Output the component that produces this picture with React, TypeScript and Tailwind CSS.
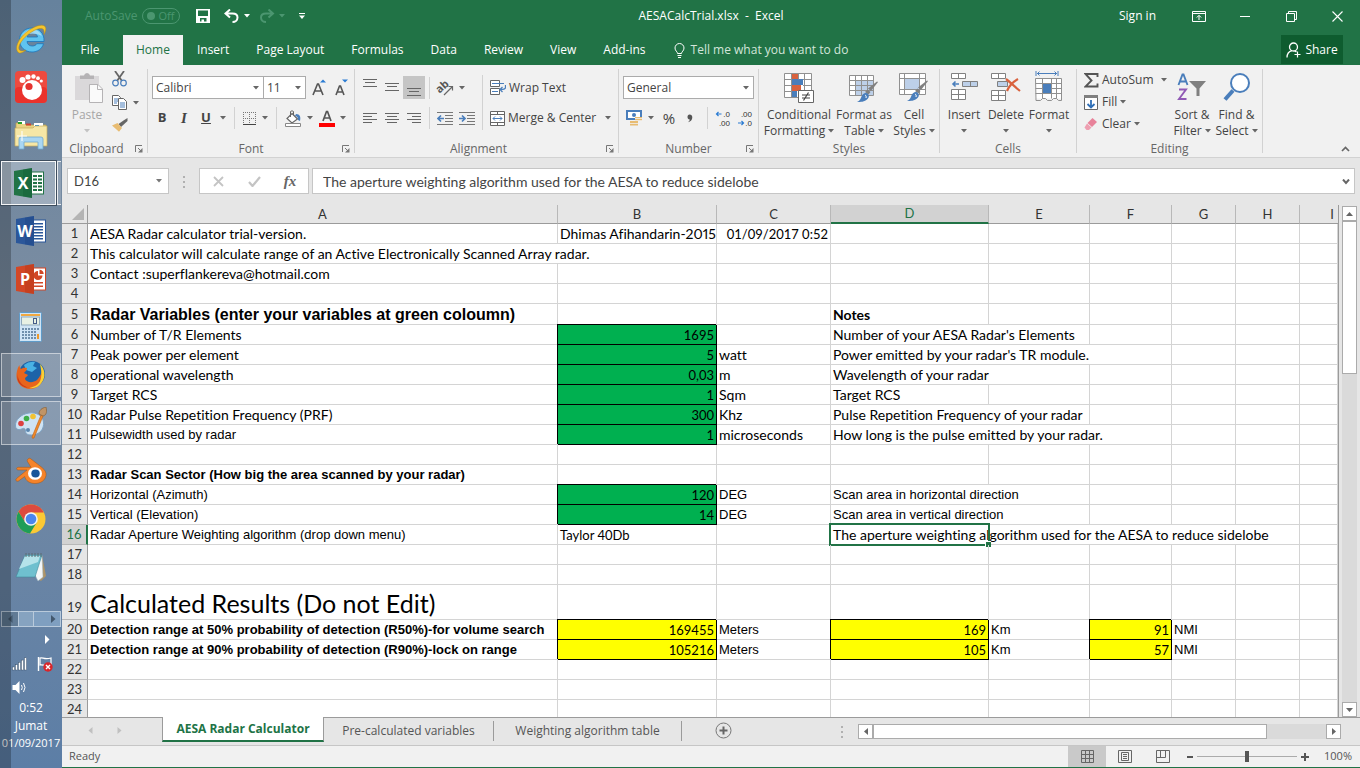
import { type ReactNode } from "react";
import { clsx } from "clsx";

/* ---------- small shared pieces ---------- */

function Arrow({ className = "text-[#666]" }: { className?: string }) {
  return (
    <svg width="6" height="4" viewBox="0 0 6 4" className={clsx("shrink-0", className)} fill="currentColor">
      <path d="M0 0h6L3 3.4z" />
    </svg>
  );
}

function Svg({ w, h, children, className }: { w: number; h: number; children: ReactNode; className?: string }) {
  return (
    <svg width={w} height={h} viewBox={`0 0 ${w} ${h}`} fill="none" className={clsx("shrink-0", className)}>
      {children}
    </svg>
  );
}

function Group({
  label,
  launcher,
  className,
  children,
}: {
  label: string;
  launcher?: boolean;
  className: string;
  children: ReactNode;
}) {
  return (
    <section
      aria-label={label}
      className={clsx("relative mt-1 flex h-[84px] shrink-0 flex-col border-r border-[#d2d2d2]", className)}
    >
      <div className="flex h-[72px]">{children}</div>
      <div className="h-3 text-center leading-4 text-[#666]">{label}</div>
      {launcher && (
        <button aria-label={`${label} settings`} className="absolute right-1 bottom-0">
          <Svg w={8} h={8}>
            <path d="M.5 7V.5H7" stroke="#777" />
            <path d="M3 3l3 3" stroke="#777" />
            <path d="M7.5 3v4.5H3z" fill="#777" />
          </Svg>
        </button>
      )}
    </section>
  );
}

function BigButton({
  icon,
  lines,
  arrowBelow,
  className,
}: {
  icon: ReactNode;
  lines: string[];
  arrowBelow?: boolean;
  className: string;
}) {
  return (
    <button className={clsx("flex flex-col items-center pt-1", className)}>
      <span className="flex h-[34px] items-start justify-center">{icon}</span>
      {lines.map((line, i) => (
        <span key={line} className="flex h-4 items-center gap-[3px] leading-4 whitespace-nowrap">
          {line}
          {!arrowBelow && i === lines.length - 1 && <Arrow />}
        </span>
      ))}
      {arrowBelow && (
        <span className="flex h-4 items-center">
          <Arrow />
        </span>
      )}
    </button>
  );
}

const Sep = ({ className = "h-[22px]" }: { className?: string }) => (
  <span className={clsx("w-px shrink-0 bg-[#d2d2d2]", className)} />
);

function Lines({ rows }: { rows: [number, number, number][] }) {
  return (
    <Svg w={14} h={13}>
      {rows.map(([x, y, w]) => (
        <path key={y} d={`M${x} ${y + 0.5}h${w}`} stroke="#666" />
      ))}
    </Svg>
  );
}

/* ---------- taskbar ---------- */

function OfficeIcon({ letter, color, dark, children }: { letter: string; color: string; dark: string; children: ReactNode }) {
  return (
    <svg width="30" height="30" viewBox="0 0 30 30">
      <rect x="15" y="4" width="14.5" height="22" fill="#fff" stroke={color} />
      {children}
      <path d="M0 3l18-3v30L0 27z" fill={color} />
      <path d="M9 1.500L18 0v30l-9-1.500z" fill={dark} opacity=".35" />
      <text x="9" y="21" textAnchor="middle" fontFamily="Open Sans, sans-serif" fontWeight="700" fontSize="16" fill="#fff">
        {letter}
      </text>
    </svg>
  );
}

const ieIcon = (
  <svg width="32" height="32" viewBox="0 0 32 32">
    <path
      d="M29 18.500H12c.3 3 2.500 4.500 5.300 4.500 2 0 3.600-.8 4.500-2.300h6.700C27 26 22.500 29 17 29 9.800 29 4.500 24 4.500 17S9.900 5 16.800 5C24.500 5 29.600 10.600 29 18.500zM22.500 14c-.4-2.500-2.300-4-5-4s-4.800 1.500-5.300 4z"
      fill="#5fc3f0"
      stroke="#1b76bd"
      strokeWidth=".8"
    />
    <path d="M7 13c2-4 6-6.500 10-6.500 5 0 8.500 2.500 9.800 6.500-5-3-14-3-19.800 0z" fill="#b9e6fa" opacity=".7" />
    <path
      d="M3.500 29.500C-1 26 3 16 11 9.500 18.500 3.300 27 .5 29.800 3.200c1.800 1.700 1 5-.8 8.300 .3-3 .1-4.700-1.200-5.600C25 4.300 18.500 7 12.500 12 5.800 17.600 2.200 24.500 4.500 27c1.300 1.400 3.800 1.200 6.500 0-3.500 3-6.200 3.600-7.500 2.500z"
      fill="#f5c52c"
      stroke="#b98a10"
      strokeWidth=".5"
    />
  </svg>
);

const gomIcon = (
  <svg width="32" height="32" viewBox="0 0 32 32">
    <rect width="32" height="32" rx="4" fill="#ee4a3f" />
    <rect y="16" width="32" height="16" rx="4" fill="#e8231f" opacity=".6" />
    <circle cx="17" cy="19" r="10" fill="#fff" />
    <circle cx="14" cy="15.500" r="3.600" fill="#e53330" />
    <circle cx="7.500" cy="9" r="3" fill="#fff" />
    <circle cx="13" cy="6" r="2.600" fill="#fff" />
    <circle cx="18.500" cy="5.500" r="2.200" fill="#fff" />
    <circle cx="23" cy="7.200" r="1.900" fill="#fff" />
    <circle cx="26.300" cy="10" r="1.600" fill="#fff" />
  </svg>
);

const explorerIcon = (
  <svg width="34" height="30" viewBox="0 0 34 30">
    <path d="M2 3h8l2 2h20v20H2z" fill="#e9d383" stroke="#b79d50" strokeWidth=".7" />
    <path d="M4 1h7v3H4zM20 3h9v4h-9z" fill="#fff" />
    <path d="M4 2h4v2H4z" fill="#28a028" />
    <path d="M12 3.500h5v2h-5z" fill="#d04030" />
    <path d="M21 5h4v2h-4z" fill="#2f8fe0" />
    <path d="M1 8h18l2-2h12v20H1z" fill="#f6e7a6" stroke="#c6ac5c" strokeWidth=".7" />
    <path d="M5 29V19q0-2 2-2h20q2 0 2 2v10h-5v-7H10v7z" fill="#a9d6f2" stroke="#6fa8cf" strokeWidth=".8" />
    <path d="M8 11v10M3 16h10" stroke="#fff" strokeWidth="1.200" opacity=".9" />
  </svg>
);

const calcIcon = (
  <svg width="24" height="30" viewBox="0 0 24 30">
    <rect x=".5" y=".5" width="22" height="29" rx="1" fill="#cfe4f5" stroke="#5e9bc9" />
    <path d="M2 2h19v2H2z" fill="#f0a840" />
    <rect x="2.500" y="5" width="18" height="8" fill="#e8f1e4" stroke="#8fa9bd" />
    <rect x="14.500" y="6.500" width="3" height="5" stroke="#445c88" fill="none" />
    {[16, 19, 22, 25].map((y) =>
      [3, 6, 9, 12, 15].map((x) => <rect key={`${x}-${y}`} x={x} y={y} width="2" height="2" fill="#6f8fac" />),
    )}
    <path d="M18 16h2v2h-2z" fill="#6f8fac" />
    <path d="M18 22h2v5h-2z" fill="#ef9a2a" />
  </svg>
);

const firefoxIcon = (
  <svg width="30" height="30" viewBox="0 0 30 30">
    <circle cx="16" cy="14" r="13" fill="#1d63a8" />
    <path d="M8 5q5-4 11-3l-2 4 4 2-5 4-6-2z" fill="#49b1e4" />
    <path d="M26 8c1 3 2 6 1 10-1 7-7 11-13 11C7 29 1 24 .500 17 .200 12 2 7 3.500 5c0 2 .5 3 1.500 4 2-1.500 4-1.500 6-1 0 2-1.500 3.500-3 5 1 1 3 1 4 2-1 2-3 2-3 4 2 4 8 4 12 1 3-3 5-7 5-12z" fill="#e8651c" />
    <path d="M24 4c5 5 6 13 2 18-3 5-8 7-13 6 6-1 11-4 12-10 1-5 0-9-1-14z" fill="#fbd034" />
    <path d="M1.500 13c0 8 5 14 13 15-6 0-12-3-13-9z" fill="#c93a1a" />
  </svg>
);

const paintIcon = (
  <svg width="32" height="32" viewBox="0 0 32 32">
    <path d="M14 6C6 7 0 13 .500 19c.300 4 4 4 6 3s4-1 4 2c0 2 1 4 6 4 8 0 13-6 12-13C27.800 9 22 5 14 6z" fill="#cfe3f3" stroke="#7ea3c4" />
    <circle cx="6" cy="16.500" r="2.800" fill="#dc4040" />
    <circle cx="11.500" cy="11.500" r="2.800" fill="#3fae49" />
    <circle cx="18" cy="9.500" r="2.800" fill="#f1c232" />
    <circle cx="13" cy="23" r="2" fill="#5b87b0" />
    <path d="M26 8l2 1-9 22q-2 1-2-1z" fill="#f08a2b" stroke="#bd6012" strokeWidth=".6" />
    <path d="M24 7c0-4 3-6 7-7 1 4 1 8-3 9z" fill="#c09466" stroke="#80592e" strokeWidth=".6" />
  </svg>
);

const blenderIcon = (
  <svg width="32" height="28" viewBox="0 0 32 28">
    <path
      d="M13 2c1-1 2-1 3 0l11 8.500c3 2.500 4.500 5 4 8-.800 5-5.500 8-11 8s-9.500-3-10.300-7L3.500 24c-2 1-3.500-1-2-2.500L12 13H3.500C1 13 1 10.500 3.500 10.300H16L12.800 5C12 4 12 3 13 2z"
      fill="#f5832a"
      stroke="#a8550f"
      strokeWidth=".5"
    />
    <ellipse cx="20" cy="16.500" rx="7" ry="6.300" fill="#fff" />
    <ellipse cx="20.500" cy="16.500" rx="4.200" ry="4" fill="#17569b" />
  </svg>
);

const chromeIcon = (
  <svg width="30" height="30" viewBox="0 0 30 30">
    <circle cx="15" cy="15" r="14.500" fill="#fbc934" />
    <path d="M15 .500A14.500 14.500 0 0 0 2.500 7.700L9 18l6-9.500h12.800A14.500 14.500 0 0 0 15 .500z" fill="#dd4b3e" />
    <path d="M2.500 7.700A14.500 14.500 0 0 0 14 29.500L21 18H9z" fill="#1f9d58" />
    <circle cx="15" cy="15" r="6.800" fill="#f1f3f4" />
    <circle cx="15" cy="15" r="5.300" fill="#4a86ee" />
  </svg>
);

const notepadIcon = (
  <svg width="32" height="30" viewBox="0 0 32 30">
    <path d="M27 3l4 21-5 5-3-2z" fill="#ad9468" />
    <path d="M10 3h17l1 22-5 4z" fill="#f4f7f8" stroke="#9fb3ba" strokeWidth=".5" />
    <path d="M10 3h17l-7 22-19 0z" fill="#6fc0cf" stroke="#3f8b9b" strokeWidth=".6" />
    <path d="M10 4h15l-2 6-19 7z" fill="#b5e3ea" />
    <path d="M11 1v4M14 1v4M17 1v4M20 1v4M23 1v4M26 1v4" stroke="#5d6b72" />
  </svg>
);

const excelIcon = (
  <OfficeIcon letter="X" color="#217346" dark="#0f5a30">
    {[7, 10.5, 14, 17.5, 21].map((y) => (
      <path key={y} d={`M19 ${y}h4v2h-4zM24 ${y}h4v2h-4z`} fill="#217346" />
    ))}
  </OfficeIcon>
);

const wordIcon = (
  <OfficeIcon letter="W" color="#2b579a" dark="#1a4180">
    {[7, 10, 13, 16, 19, 22].map((y) => (
      <path key={y} d={`M18 ${y}h9v1.500h-9z`} fill="#2b579a" />
    ))}
  </OfficeIcon>
);

const pptIcon = (
  <OfficeIcon letter="P" color="#d24726" dark="#b13415">
    <path d="M22 7a4.500 4.500 0 1 0 4.500 4.500H22z" fill="#d24726" />
    <path d="M23.500 5.800v4.200h4.200a4.200 4.200 0 0 0-4.200-4.200z" fill="#d24726" />
    <path d="M18 18h9v1.500h-9zM18 21.500h9V23h-9z" fill="#d24726" />
  </OfficeIcon>
);

const apps: { name: string; icon: ReactNode; state?: "active" | "open" }[] = [
  { name: "Internet Explorer", icon: ieIcon },
  { name: "GOM Player", icon: gomIcon },
  { name: "File Explorer", icon: explorerIcon },
  { name: "Excel", icon: excelIcon, state: "active" },
  { name: "Word", icon: wordIcon },
  { name: "PowerPoint", icon: pptIcon },
  { name: "Calculator", icon: calcIcon },
  { name: "Firefox", icon: firefoxIcon, state: "open" },
  { name: "Paint", icon: paintIcon, state: "open" },
  { name: "Blender", icon: blenderIcon },
  { name: "Chrome", icon: chromeIcon },
  { name: "Notepad", icon: notepadIcon },
];

function Taskbar() {
  return (
    <aside className="relative flex w-[62px] shrink-0 flex-col bg-linear-to-b from-[#66829d] via-[#7b8da2] via-40% to-[#5c7ea6] pt-[15px]">
      <div className="absolute inset-y-0 left-0 w-[11px] bg-black/25" />
      {apps.map((app) => (
        <div key={app.name} className="relative flex h-12 py-[2px] pr-px pl-px">
          <button
            aria-label={app.name}
            className={clsx(
              "flex flex-1 items-center justify-center border",
              app.state === "active" && "border-white/90 bg-white/30 shadow-[0_0_0_1px_#3d4c5c]",
              app.state === "open" && "border-white/50 bg-white/15",
              !app.state && "border-transparent",
            )}
          >
            {app.icon}
          </button>
          {app.state === "active" && (
            <span className="ml-px w-1 border border-r-0 border-white/80 bg-white/20" />
          )}
        </div>
      ))}
      <div className="mx-px mt-5 flex h-4 border border-[#b9cadb] bg-[#7f9fc0]">
        <span className="flex w-4 items-center justify-center bg-[#617b95]">
          <Svg w={5} h={8}>
            <path d="M4.500 0v8L0 4z" fill="#43586d" />
          </Svg>
        </span>
        <span className="w-4 border-x border-[#b9cadb] bg-[#86a3c0]" />
        <span className="flex flex-1 items-center justify-end pr-1">
          <Svg w={5} h={8}>
            <path d="M0 0v8l4.500-4z" fill="#43586d" />
          </Svg>
        </span>
      </div>
      <button aria-label="Show hidden icons" className="mt-2 mr-3 self-end">
        <Svg w={5} h={9}>
          <path d="M0 0v9l4.500-4.500z" fill="#fff" />
        </Svg>
      </button>
      <div className="mt-3 flex h-4 items-center gap-[9px] pl-3">
        <Svg w={16} h={14}>
          {[0, 1, 2, 3, 4].map((i) => (
            <rect key={i} x={i * 3 + 0.5} y={10 - i * 2.3} width="2" height={3 + i * 2.3} fill="#fff" stroke="#34495e" strokeWidth=".4" />
          ))}
        </Svg>
        <Svg w={16} h={16}>
          <path d="M1.500 1v14" stroke="#fff" strokeWidth="1.400" />
          <path d="M3 2c3-1 4 2 11 0v7c-6 2-8-1-11 0z" stroke="#fff" strokeWidth="1.200" />
          <circle cx="11" cy="11" r="4.700" fill="#d9252a" />
          <path d="M9 9l4 4M13 9l-4 4" stroke="#fff" strokeWidth="1.400" />
        </Svg>
      </div>
      <div className="mt-2 pl-3">
        <Svg w={16} h={15}>
          <path d="M.500 5h3l4-4v13l-4-4h-3z" fill="#fff" />
          <path d="M9.500 5q1.500 2.500 0 5M11.500 3q3 4.500 0 9" stroke="#fff" />
        </Svg>
      </div>
      <div className="mt-1 text-center text-[12px] leading-[18px] whitespace-nowrap text-white">
        <div>0:52</div>
        <div>Jumat</div>
        <div className="text-[11px] leading-4">01/09/2017</div>
      </div>
    </aside>
  );
}

/* ---------- title bar and tabs ---------- */

function TitleBar() {
  return (
    <header className="flex h-8 items-center text-white">
      <div className="flex flex-1 items-center">
        <label htmlFor="autosave" className="ml-[23px] text-[#4b9670]">
          AutoSave
        </label>
        <span className="relative ml-[5px] h-4 w-[38px] rounded-full border border-[#4b9670] text-[11px] leading-[14px] text-[#4b9670]">
          <input id="autosave" type="checkbox" disabled className="absolute inset-0 appearance-none" />
          <span className="absolute top-[3px] left-1 size-2 rounded-full bg-[#4b9670]" />
          <span className="absolute right-[5px]">Off</span>
        </span>
        <button aria-label="Save" className="ml-4">
          <Svg w={14} h={14}>
            <path d="M0 0h14v14H0zM2 1.500V7h10V1.500zM4 9v3.500h1.500V10.500H8v2h2.500V9z" fill="#fff" fillRule="evenodd" />
          </Svg>
        </button>
        <button aria-label="Undo" className="ml-[14px]">
          <Svg w={16} h={14}>
            <path d="M6 .500L1.500 4.500 6 8.500M2 4.500h6.500c3 0 5 1.500 5 4s-2 4.500-5 4.500" stroke="#fff" strokeWidth="2" />
          </Svg>
        </button>
        <Arrow className="ml-1 text-white" />
        <button aria-label="Redo" className="ml-[9px]">
          <Svg w={16} h={14}>
            <path d="M9.500.500L14 4.500 9.500 8.500M13.500 4.500H7c-3 0-5 1.500-5 4S4 13 7 13" stroke="#4b9670" strokeWidth="2" />
          </Svg>
        </button>
        <Arrow className="ml-1 text-[#4b9670]" />
        <button aria-label="Customize Quick Access Toolbar" className="ml-[14px]">
          <Svg w={6} h={6}>
            <path d="M0 .500h6" stroke="#fff" />
            <path d="M0 2.500h6L3 6z" fill="#fff" />
          </Svg>
        </button>
      </div>
      <h1 className="whitespace-pre">AESACalcTrial.xlsx&nbsp; -&nbsp; Excel</h1>
      <div className="flex flex-1 items-center justify-end">
        <button className="mr-5">Sign in</button>
        <button aria-label="Ribbon display options" className="flex w-[46px] justify-center">
          <Svg w={14} h={11}>
            <path d="M.500.500h13v10H.500zM.500 2.500h13M7 9V4.500M4.800 6.500L7 4.300l2.200 2.200" stroke="#fff" />
          </Svg>
        </button>
        <button aria-label="Minimize" className="flex w-[46px] justify-center">
          <Svg w={10} h={11}>
            <path d="M0 5.500h10" stroke="#fff" />
          </Svg>
        </button>
        <button aria-label="Restore" className="flex w-[46px] justify-center">
          <Svg w={11} h={11}>
            <path d="M.500 2.500h8v8h-8zM2.500 2.500v-2h8v8h-2" stroke="#fff" />
          </Svg>
        </button>
        <button aria-label="Close" className="flex w-[46px] justify-center">
          <Svg w={11} h={11}>
            <path d="M.500.500l10 10M10.500.500l-10 10" stroke="#fff" strokeWidth="1.100" />
          </Svg>
        </button>
      </div>
    </header>
  );
}

const ribbonTabs = ["Home", "Insert", "Page Layout", "Formulas", "Data", "Review", "View", "Add-ins"];

function RibbonTabs() {
  return (
    <nav className="mt-[3px] flex h-[30px] items-stretch gap-px text-white">
      <button className="w-[60px] pr-1">File</button>
      {ribbonTabs.map((tab) => (
        <button
          key={tab}
          className={clsx("px-[13px] whitespace-nowrap", tab === "Home" && "bg-[#f1f1f1] text-[#217346]")}
        >
          {tab}
        </button>
      ))}
      <button className="ml-[14px] flex items-center gap-[6px] whitespace-nowrap text-[#d3e5da]">
        <Svg w={11} h={15}>
          <path d="M3.500 10.500C3.500 8.500 1 8 1 5a4.500 4.500 0 0 1 9 0c0 3-2.500 3.500-2.500 5.500zM3.500 12.500h4M4 14.500h3" stroke="#fff" />
        </Svg>
        Tell me what you want to do
      </button>
      <button className="mr-[17px] mb-px ml-auto flex w-[62px] items-center justify-center gap-1 bg-[#0e5c2f]">
        <Svg w={15} h={16}>
          <circle cx="7.500" cy="5" r="4" stroke="#fff" strokeWidth="1.300" />
          <path d="M1 15.500c0-4 2-6 5-6.800M8.500 9c1 .2 1.500.6 2 1" stroke="#fff" strokeWidth="1.300" />
          <path d="M11.500 9.500v6M8.500 12.500h6" stroke="#fff" strokeWidth="1.200" />
        </Svg>
        Share
      </button>
    </nav>
  );
}

/* ---------- ribbon ---------- */

function ComboBox({ label, value, className }: { label: string; value: string; className: string }) {
  return (
    <span className={clsx("relative h-[23px] border border-[#ababab] bg-white", className)}>
      <select
        aria-label={label}
        defaultValue={value}
        className="block size-full appearance-none pl-[3px] text-[#444] outline-none"
      >
        <option>{value}</option>
      </select>
      <Arrow className="pointer-events-none absolute top-[9px] right-1 text-[#666]" />
    </span>
  );
}

const brush = (
  <>
    <path d="M30 6l-7 9-3-2.500 9-7z" fill="#808080" />
    <path d="M19.500 13.500l3 2.500-2 2.500-3.500-2.500z" fill="#808080" />
    <path d="M18.500 17c3 1.500 3 4 1 6-3 3-7 3-10.500 3 3-1 3.500-3 4.500-5.500s3-4 5-3.500z" fill="#4a7ebb" />
    <path d="M17 19c1 .5 1.500 1.500 1 3" stroke="#fff" />
  </>
);

function Ribbon() {
  return (
    <div className="flex h-[93px] border-b border-[#d2d2d2] bg-[#f1f1f1] text-[#444]">
      <Group label="Clipboard" launcher className="w-[86px] pr-4 [&>div:first-child]:w-[85px]">
        <button className="flex w-[50px] flex-col items-center pt-1 text-[#a6a6a6]">
          <Svg w={28} h={32} className="mb-[2px] ml-1">
            <path d="M0 3h24v24H0z" fill="#dad8da" />
            <path d="M5 2.500h4Q9.500 0 12 0t3 2.500h4V6H5z" fill="#b5b3b5" />
            <path d="M14.500 11.500h8.500l4.500 4.500v13.500h-13z" fill="#fafafa" stroke="#b5b3b5" />
            <path d="M22.500 11.500v5h5" stroke="#b5b3b5" />
          </Svg>
          <span className="leading-4">Paste</span>
          <span className="flex h-4 items-center">
            <Arrow className="text-[#c3c3c3]" />
          </span>
        </button>
        <div className="flex flex-col gap-2 pt-[2px]">
          <button aria-label="Cut">
            <Svg w={15} h={16}>
              <path d="M3 0l7 10M12 0L5 10" stroke="#666" strokeWidth="1.800" />
              <circle cx="3.500" cy="12" r="2.800" stroke="#4a7ebb" strokeWidth="1.200" />
              <circle cx="11.500" cy="12" r="2.800" stroke="#4a7ebb" strokeWidth="1.200" />
            </Svg>
          </button>
          <button aria-label="Copy" className="flex items-center gap-[6px]">
            <Svg w={15} h={15}>
              <path d="M.500.500h6l2 2v8h-8z" fill="#fff" stroke="#666" />
              <path d="M2 4h4M2 6h4M2 8h3" stroke="#4a7ebb" />
              <path d="M6.500 3.500h5l3 3v8h-8z" fill="#fff" stroke="#666" />
              <path d="M8 8h5M8 10h5M8 12h5" stroke="#4a7ebb" />
            </Svg>
            <Arrow />
          </button>
          <button aria-label="Format painter">
            <Svg w={16} h={14}>
              <path d="M15.500 0v3L9 9 6.500 6l5-3.500z" fill="#666" />
              <path d="M5.500 5L10 10l-3 3.800L0 7.500z" fill="#e8bc72" />
            </Svg>
          </button>
        </div>
      </Group>

      <Group label="Font" launcher className="w-[207px]">
        <div className="flex flex-col pt-[7px] pl-1">
          <div className="flex h-[23px] items-center">
            <ComboBox label="Font" value="Calibri" className="w-28" />
            <ComboBox label="Font size" value="11" className="-ml-px w-[43px]" />
            <button aria-label="Increase font size" className="ml-[6px]">
              <Svg w={14} h={18}>
                <path d="M1 16L5.500 5h1L11 16M2.800 12h6.400" stroke="#555" strokeWidth="1.600" />
                <path d="M8 3.500h6L11 .500z" fill="#2b7cd3" />
              </Svg>
            </button>
            <button aria-label="Decrease font size" className="ml-[9px]">
              <Svg w={13} h={18}>
                <path d="M1 16l3.500-9h1L9 16M2.300 13h5.400" stroke="#555" strokeWidth="1.600" />
                <path d="M7 .500h6L10 3.500z" fill="#2b7cd3" />
              </Svg>
            </button>
          </div>
          <div className="mt-2 flex h-[22px] items-center">
            <button className="w-5 text-[13px] font-bold">B</button>
            <button className="ml-[2px] w-5 font-['Liberation_Serif',serif] text-[15px] font-bold italic">I</button>
            <button className="ml-[2px] w-5 text-[13px] font-bold underline">U</button>
            <Arrow className="ml-1 text-[#666]" />
            <Sep className="ml-2 h-[22px]" />
            <button aria-label="Borders" className="ml-2 flex items-center gap-[6px]">
              <Svg w={13} h={13}>
                <path d="M.500 0v12M6.500 0v12M12.500 0v12M0 .500h13M0 6.500h13" stroke="#777" strokeDasharray="1 1" />
                <path d="M0 12.500h13" stroke="#444" />
              </Svg>
              <Arrow />
            </button>
            <Sep className="ml-2 h-[22px]" />
            <button aria-label="Fill color" className="ml-2 flex items-center gap-[6px]">
              <Svg w={16} h={17}>
                <path d="M7 3.500l5.500 5.500L7 13 2 8.500z" fill="#fff" stroke="#666" strokeWidth="1.200" />
                <path d="M5.500 7V1.500Q7 0 8.500 1.500V5" stroke="#666" />
                <path d="M11 4c4 0 5 3 4 7l-2-1c0-3-1-4-3-4z" fill="#4a7ebb" />
                <path d="M.500 13.500h15v3H.500z" fill="#fff" stroke="#888" />
              </Svg>
              <Arrow />
            </button>
            <button aria-label="Font color" className="ml-[6px] flex items-center gap-[5px]">
              <Svg w={16} h={17}>
                <path d="M4 11L7.500 1.500h1L12 11M5.300 8h5.400" stroke="#555" strokeWidth="1.700" />
                <path d="M0 13h16v4H0z" fill="#f00" />
              </Svg>
              <Arrow />
            </button>
          </div>
        </div>
      </Group>

      <Group label="Alignment" launcher className="w-[264px] pr-4 [&>div:first-child]:w-[263px]">
        <div className="flex w-[74px] shrink-0 flex-col pt-[7px]">
          <div className="flex h-[23px] items-center justify-end">
            <button aria-label="Top align" className="mb-1">
              <Lines rows={[[0, 0, 14], [2, 3, 10], [0, 7, 14]]} />
            </button>
            <button aria-label="Middle align" className="ml-2">
              <Lines rows={[[0, 2, 14], [2, 5, 10], [0, 9, 14]]} />
            </button>
            <button aria-label="Bottom align" className="ml-1 flex h-[23px] w-[22px] items-end justify-center bg-[#c5c5c5] pb-[3px]">
              <Lines rows={[[0, 5, 14], [2, 8, 10], [0, 12, 14]]} />
            </button>
            <span className="w-1" />
          </div>
          <div className="mt-2 flex h-[22px] items-center gap-2 pl-2">
            <button aria-label="Align left">
              <Lines rows={[[0, 1, 14], [0, 4, 9], [0, 7, 14], [0, 10, 9]]} />
            </button>
            <button aria-label="Center">
              <Lines rows={[[0, 1, 14], [2, 4, 10], [0, 7, 14], [2, 10, 10]]} />
            </button>
            <button aria-label="Align right">
              <Lines rows={[[0, 1, 14], [5, 4, 9], [0, 7, 14], [5, 10, 9]]} />
            </button>
          </div>
        </div>
        <div className="flex w-[53px] shrink-0 flex-col pt-[7px]">
          <div className="flex h-[23px] items-center">
            <Sep />
            <button aria-label="Orientation" className="ml-[7px] flex items-center gap-[5px]">
              <svg width="17" height="16" viewBox="0 0 17 16" fill="none" className="overflow-visible">
                <text x="0" y="11" fontSize="11" fontWeight="700" fontFamily="Open Sans, sans-serif" fill="#555" transform="rotate(-42 5 9)">
                  ab
                </text>
                <path d="M7 15l8-8M11.500 6.500H15.500v4" stroke="#666" strokeWidth="1.200" />
              </svg>
              <Arrow />
            </button>
          </div>
          <div className="mt-2 flex h-[22px] items-center">
            <Sep />
            <button aria-label="Decrease indent" className="ml-[7px]">
              <Svg w={16} h={13}>
                <path d="M0 .500h16M8 3.500h8M8 6.500h8M8 9.500h8M0 12.500h16" stroke="#777" />
                <path d="M7 6.500H2M4 3.500l-3 3 3 3" stroke="#4a7ebb" strokeWidth="1.700" />
              </Svg>
            </button>
            <button aria-label="Increase indent" className="ml-[6px]">
              <Svg w={16} h={13}>
                <path d="M0 .500h16M8 3.500h8M8 6.500h8M8 9.500h8M0 12.500h16" stroke="#777" />
                <path d="M0 6.500h5M3 3.500l3 3-3 3" stroke="#4a7ebb" strokeWidth="1.700" />
              </Svg>
            </button>
          </div>
        </div>
        <Sep className="mt-[6px] h-[55px]" />
        <div className="flex flex-col pt-[7px] pl-[7px]">
          <button className="flex h-[23px] items-center gap-[3px] whitespace-nowrap">
            <Svg w={16} h={15}>
              <path d="M.500.500h9v6h-9zM.500 8.500h9v6h-9z" fill="#fff" stroke="#666" />
              <path d="M2 3.500h12M2 11.500h6" stroke="#4a7ebb" />
              <path d="M15.500 5v2.500q0 2-5 2M12.500 7l-2.500 2.500 2.500 2.500" stroke="#4a7ebb" strokeWidth="1.300" />
            </Svg>
            Wrap Text
          </button>
          <button className="mt-2 flex h-[22px] items-center gap-[3px] whitespace-nowrap">
            <Svg w={15} h={15}>
              <path d="M.500.500h14v14H.500zM.500 3.500h14M.500 11.500h14M7.500.500v3M7.500 11.500v3" fill="#fff" stroke="#666" />
              <path d="M3 7.500h9M5 5.500l-2 2 2 2M10 5.500l2 2-2 2" stroke="#4a7ebb" />
            </Svg>
            Merge &amp; Center
            <Arrow className="ml-[6px] text-[#666]" />
          </button>
        </div>
      </Group>

      <Group label="Number" launcher className="w-[140px]">
        <div className="flex flex-col pt-[7px] pl-1">
          <ComboBox label="Number format" value="General" className="w-[131px]" />
          <div className="mt-2 flex h-[22px] items-center">
            <button aria-label="Accounting number format" className="ml-[3px] flex items-center gap-[5px]">
              <Svg w={17} h={16}>
                <path d="M1 1h14v8H1z" fill="#fff" stroke="#4a7ebb" strokeWidth="2" />
                <circle cx="8" cy="5" r="2" fill="#4a7ebb" />
                <path d="M9 7h7v4H9zM4 11h8v4.500H4z" fill="#e8bc72" />
                <path d="M9 8.500h7M9 10.500h7M4 13.500h8" stroke="#f1f1f1" strokeWidth=".8" />
              </Svg>
              <Arrow />
            </button>
            <button className="ml-[6px] w-[18px] text-[15px]">%</button>
            <button aria-label="Comma style" className="ml-[9px] w-[14px]">
              <Svg w={6} h={9}>
                <path d="M2.500.500C4.300.500 5.300 1.700 5.300 3.300 5.300 5.800 3.800 7.600 1 8.300c1-.8 1.700-1.700 1.700-2.700C1.300 5.500.500 4.300.500 3 .500 1.500 1.300.500 2.500.500z" fill="#555" />
              </Svg>
            </button>
            <Sep className="ml-[6px] h-[22px]" />
            <button aria-label="Increase decimal" className="ml-[7px]">
              <svg width="16" height="18" viewBox="0 0 16 18" fill="none">
                <path d="M6.500 5H1.500M3.500 3l-2 2 2 2" stroke="#2b7cd3" strokeWidth="1.200" />
                <text x="15" y="8" textAnchor="end" fontSize="8" fontFamily="Liberation Sans, sans-serif" fill="#333">.0</text>
                <text x="15" y="17" textAnchor="end" fontSize="8" fontFamily="Liberation Sans, sans-serif" fill="#333">.00</text>
              </svg>
            </button>
            <button aria-label="Decrease decimal" className="ml-[6px]">
              <svg width="16" height="18" viewBox="0 0 16 18" fill="none">
                <path d="M1 14h5.500M4.500 12l2 2-2 2" stroke="#2b7cd3" strokeWidth="1.200" />
                <text x="15" y="8" textAnchor="end" fontSize="8" fontFamily="Liberation Sans, sans-serif" fill="#333">.00</text>
                <text x="15" y="17" textAnchor="end" fontSize="8" fontFamily="Liberation Sans, sans-serif" fill="#333">.0</text>
              </svg>
            </button>
          </div>
        </div>
      </Group>

      <Group label="Styles" className="w-[181px]">
        <BigButton
          className="w-[80px]"
          lines={["Conditional", "Formatting"]}
          icon={
            <Svg w={30} h={30}>
              <path d="M.500.500h27v24H.500z" fill="#fff" />
              <path d="M8 0h6v6H8z" fill="#d9623e" />
              <path d="M8 6h11v6H8z" fill="#4a7ebb" />
              <path d="M8 12h9v6H8z" fill="#d9623e" />
              <path d="M8 18h5v6H8z" fill="#4a7ebb" />
              <path d="M.500.500h27v24H.500zM.500 6.500H8M.500 12.500H8M.500 18.500H8M19 6.500h8.500M19 12.500h8.500M7.500.500v24M14.500.500v6M20.500.500v24" stroke="#909090" />
              <path d="M14.500 17.500h15v12h-15z" fill="#fff" stroke="#666" />
              <path d="M18 22h8M18 25h8M24.500 19.500l-5 8" stroke="#444" strokeWidth="1.200" />
            </Svg>
          }
        />
        <BigButton
          className="w-[50px]"
          lines={["Format as", "Table"]}
          icon={
            <Svg w={30} h={30}>
              <path d="M.500 2.500h24v20H.500z" fill="#fff" />
              <path d="M6.500 7.500h18v15h-18z" fill="#bdd0e9" />
              <path d="M.500 2.500h24v20H.500zM.500 7.500h24M.500 12.500h24M.500 17.500h24M6.500 2.500v20M12.500 2.500v20M18.500 2.500v20" stroke="#909090" />
              <g transform="translate(-1 3)">{brush}</g>
            </Svg>
          }
        />
        <BigButton
          className="w-[50px]"
          lines={["Cell", "Styles"]}
          icon={
            <Svg w={30} h={30}>
              <path d="M.500.500h26v21H.500z" fill="#fff" />
              <path d="M5.500 5.500h15v11h-15z" fill="#bdd0e9" />
              <path d="M.500.500h26v21H.500zM.500 5.500h26M.500 16.500h26M5.500.500v21M20.500.500v21" stroke="#909090" />
              <g transform="translate(-1 2)">{brush}</g>
            </Svg>
          }
        />
      </Group>

      <Group label="Cells" className="w-[137px]">
        <BigButton
          className="ml-1 w-10"
          arrowBelow
          lines={["Insert"]}
          icon={
            <Svg w={27} h={28}>
              <path d="M.500.500h14v5H.500zM7.500.500v5M.500 16.500h14v10H.500zM.500 21.500h14M7.500 16.500v10" fill="#fff" stroke="#808080" />
              <path d="M11.500 8.500h15v5h-15zM19.500 8.500v5" fill="#bdd0e9" stroke="#808080" />
              <path d="M8 11H2M4.500 8.500L2 11l2.500 2.500" stroke="#4a7ebb" strokeWidth="1.600" />
            </Svg>
          }
        />
        <BigButton
          className="w-[44px]"
          arrowBelow
          lines={["Delete"]}
          icon={
            <Svg w={30} h={28}>
              <path d="M.500.500h14v5H.500zM7.500.500v5M.500 17.500h14v10H.500zM.500 22.500h14M7.500 17.500v10" fill="#fff" stroke="#808080" />
              <path d="M6.500 8.500h10v5h-10z" fill="#bdd0e9" stroke="#808080" />
              <path d="M15 6c4 3 9 8 14 12M27 6c-5 3-9 7-11 12" stroke="#d9623e" strokeWidth="2.200" />
            </Svg>
          }
        />
        <BigButton
          className="w-[42px]"
          arrowBelow
          lines={["Format"]}
          icon={
            <Svg w={28} h={32} className="-mt-[2px]">
              <path d="M1 0v5M23 0v5M2 2.500h20M4.500.500l-2 2 2 2M19.500.500l2 2-2 2" stroke="#4a7ebb" />
              <path d="M.500 7.500h26v20H.500z" fill="#fff" />
              <path d="M.500 7.500h26v22h-3l-2-2h-3l-2 2h-4l-2-2h-3l-2 2h-4.500zM.500 12.500h26M.500 22.500h26M.500 17.500h7M16 17.500h10.500M7.500 7.500v20M16.500 7.500v20M21.500 7.500v20" stroke="#909090" />
              <path d="M8 13h8v9H8z" fill="#4a7ebb" />
            </Svg>
          }
        />
      </Group>

      <Group label="Editing" className="w-[186px]">
        <div className="flex w-[92px] flex-col pl-[7px]">
          <button className="flex h-[22px] items-center gap-[3px] whitespace-nowrap">
            <Svg w={15} h={15}>
              <path d="M13.500 4V1H1.500L7.500 7.500l-6 6h12v-3" stroke="#555" strokeWidth="1.900" />
            </Svg>
            AutoSum
            <Arrow className="ml-1 text-[#666]" />
          </button>
          <button className="flex h-[22px] items-center gap-[3px]">
            <Svg w={15} h={15}>
              <path d="M.500.500h13v14H.500z" fill="#fff" stroke="#666" />
              <path d="M0 0h14v3H0z" fill="#808080" />
              <path d="M7 5v7M3.500 9L7 12.500 10.500 9" stroke="#2f6fb7" strokeWidth="1.800" />
            </Svg>
            Fill
            <Arrow />
          </button>
          <button className="flex h-[22px] items-center gap-[3px]">
            <Svg w={15} h={14}>
              <path d="M8.500 1l4.500 4-5 5-4.500-4z" fill="#e8829a" />
              <path d="M3 6.500L7.500 10.500 5 13H2.500L.500 10.500z" fill="#ee9fb1" />
            </Svg>
            Clear
            <Arrow />
          </button>
        </div>
        <BigButton
          className="w-[46px]"
          lines={["Sort &", "Filter"]}
          icon={
            <svg width="30" height="30" viewBox="0 0 30 30" fill="none">
              <path d="M1.500 12L5.500 1.500h1L10.500 12M3 8.500h6" stroke="#4a7ebb" strokeWidth="1.900" />
              <path d="M2 16.500h7l-7 9.500h7.500" stroke="#9059b5" strokeWidth="1.900" />
              <path d="M12 8h17l-6.500 7.500V23h-3v-7.500z" fill="#808080" />
            </svg>
          }
        />
        <BigButton
          className="w-[43px]"
          lines={["Find &", "Select"]}
          icon={
            <Svg w={28} h={30}>
              <path d="M10 17.500L2 26.500" stroke="#4a7ebb" strokeWidth="4" />
              <circle cx="17" cy="10" r="9" fill="#fff" stroke="#4a7ebb" strokeWidth="2" />
            </Svg>
          }
        />
      </Group>
      <button aria-label="Collapse the ribbon" className="mt-auto mr-[10px] mb-[5px] ml-auto">
        <Svg w={9} h={6}>
          <path d="M1 5l3.500-3.500L8 5" stroke="#666" strokeWidth="1.700" />
        </Svg>
      </button>
    </div>
  );
}

/* ---------- formula bar ---------- */

function FormulaBar() {
  return (
    <div className="flex h-[47px] items-start px-[5px] pt-[10px] font-['Lato',sans-serif] text-[#444]">
      <div className="relative h-[26px] w-[102px] shrink-0 border border-[#c6c6c6] bg-white">
        <input aria-label="Name box" defaultValue="D16" className="size-full pl-[6px] text-[13px] outline-none" />
        <Arrow className="absolute top-[10px] right-[6px] text-[#777]" />
      </div>
      <div className="mt-2 ml-[14px] flex w-[2px] shrink-0 flex-col gap-[3px]">
        <span className="size-[2px] bg-[#b0b0b0]" />
        <span className="size-[2px] bg-[#b0b0b0]" />
        <span className="size-[2px] bg-[#b0b0b0]" />
      </div>
      <div className="ml-[14px] flex h-[26px] w-[110px] shrink-0 items-center border border-[#c6c6c6] bg-white">
        <button aria-label="Cancel" className="flex w-9 justify-center">
          <Svg w={11} h={11}>
            <path d="M1 1l9 9M10 1l-9 9" stroke="#c4c4c4" strokeWidth="1.800" />
          </Svg>
        </button>
        <button aria-label="Enter" className="flex w-9 justify-center">
          <Svg w={13} h={11}>
            <path d="M1 6l3.500 4L12 1" stroke="#c4c4c4" strokeWidth="2.200" />
          </Svg>
        </button>
        <button className="w-9 font-['Liberation_Serif',serif] text-[15px] leading-4 font-bold text-[#666] italic">
          fx
        </button>
      </div>
      <div className="relative ml-[3px] h-[26px] flex-1 border border-[#c6c6c6] bg-white">
        <input
          aria-label="Formula bar"
          defaultValue="The aperture weighting algorithm used for the AESA to reduce sidelobe"
          className="size-full pl-[10px] text-[14px] outline-none [font-variant-ligatures:none]"
        />
        <Svg w={8} h={6} className="absolute top-[10px] right-1">
          <path d="M1 .500l3 3.500 3-3.500" stroke="#666" strokeWidth="2" />
        </Svg>
      </div>
    </div>
  );
}

/* ---------- worksheet ---------- */

type Cell = {
  text?: string;
  span?: number;
  right?: boolean;
  fill?: "green" | "yellow";
  font?: string;
  selected?: boolean;
};

const COLS = ["A", "B", "C", "D", "E", "F", "G", "H", "I"];

const arial = "font-['Liberation_Sans',sans-serif] text-[13px]";
const arialBold = "font-['Liberation_Sans',sans-serif] text-[13px] font-bold";

const green = (text: string): Cell => ({ text, fill: "green", right: true, font: "text-[13px]" });
const yellow = (text: string): Cell => ({ text, fill: "yellow", right: true, font: "text-[13px]" });

const sheet: Record<number, Record<string, Cell>> = {
  1: {
    A: { text: "AESA Radar calculator trial-version." },
    B: { text: "Dhimas Afihandarin-2015", font: "proportional-nums" },
    C: { text: "01/09/2017 0:52", right: true, font: "text-[13px]" },
  },
  2: { A: { text: "This calculator will calculate range of an Active Electronically Scanned Array radar.", span: 2 } },
  3: { A: { text: "Contact :superflankereva@hotmail.com" } },
  5: {
    A: {
      text: "Radar Variables (enter your variables at green coloumn)",
      font: "font-['Liberation_Sans',sans-serif] text-[16px] font-bold",
    },
    D: { text: "Notes", font: "font-bold" },
  },
  6: {
    A: { text: "Number of T/R Elements" },
    B: green("1695"),
    D: { text: "Number of your AESA Radar's Elements", span: 2 },
  },
  7: {
    A: { text: "Peak power per element" },
    B: green("5"),
    C: { text: "watt" },
    D: { text: "Power emitted by your radar's TR module.", span: 3 },
  },
  8: {
    A: { text: "operational wavelength" },
    B: green("0,03"),
    C: { text: "m" },
    D: { text: "Wavelength of your radar", span: 2 },
  },
  9: { A: { text: "Target RCS" }, B: green("1"), C: { text: "Sqm" }, D: { text: "Target RCS" } },
  10: {
    A: { text: "Radar Pulse Repetition Frequency (PRF)" },
    B: green("300"),
    C: { text: "Khz" },
    D: { text: "Pulse Repetition Frequency of your radar", span: 2 },
  },
  11: {
    A: { text: "Pulsewidth used by radar", font: arial },
    B: green("1"),
    C: { text: "microseconds" },
    D: { text: "How long is the pulse emitted by your radar.", span: 3 },
  },
  13: { A: { text: "Radar Scan Sector (How big the area scanned by your radar)", font: arialBold } },
  14: {
    A: { text: "Horizontal (Azimuth)", font: arial },
    B: green("120"),
    C: { text: "DEG", font: arial },
    D: { text: "Scan area in horizontal direction", span: 2, font: arial },
  },
  15: {
    A: { text: "Vertical (Elevation)", font: arial },
    B: green("14"),
    C: { text: "DEG", font: arial },
    D: { text: "Scan area in vertical direction", span: 2, font: arial },
  },
  16: {
    A: { text: "Radar Aperture Weighting algorithm (drop down menu)", font: arial },
    B: { text: "Taylor 40Db", font: "text-[13px]" },
    D: { text: "The aperture weighting algorithm used for the AESA to reduce sidelobe", span: 5, selected: true },
  },
  19: { A: { text: "Calculated Results (Do not Edit)", font: "text-[25px]" } },
  20: {
    A: { text: "Detection range at 50% probability of detection (R50%)-for volume search", font: arialBold },
    B: yellow("169455"),
    C: { text: "Meters", font: arial },
    D: yellow("169"),
    E: { text: "Km", font: arial },
    F: yellow("91"),
    G: { text: "NMI", font: arial },
  },
  21: {
    A: { text: "Detection range at 90% probability of detection (R90%)-lock on range", font: arialBold },
    B: yellow("105216"),
    C: { text: "Meters", font: arial },
    D: yellow("105"),
    E: { text: "Km", font: arial },
    F: yellow("57"),
    G: { text: "NMI", font: arial },
  },
};

function SheetRow({ n }: { n: number }) {
  const cells = sheet[n] ?? {};
  const out: ReactNode[] = [];
  for (let i = 0; i < COLS.length; i++) {
    const cell = cells[COLS[i]] ?? {};
    out.push(
      <td
        key={COLS[i]}
        colSpan={cell.span}
        className={clsx(
          "relative border-r border-b p-0 align-bottom",
          cell.fill ? "border-black shadow-[-1px_-1px_0_0_#000]" : "border-[#d4d4d4]",
          cell.fill === "green" && "bg-[#00b050]",
          cell.fill === "yellow" && "bg-[#ffff00]",
        )}
      >
        <div
          className={clsx(
            "px-[2px] whitespace-nowrap",
            n === 19 ? "leading-8" : "h-[19px] leading-5",
            cell.right && "flex justify-end",
            cell.font,
          )}
        >
          {cell.text}
        </div>
        {cell.selected && (
          <div className="absolute -top-[2px] -left-[2px] h-[23px] w-[161px] border-2 border-[#217346]">
            <span className="absolute -right-[3px] -bottom-[3px] size-[6px] border-t border-l border-white bg-[#217346]" />
          </div>
        )}
      </td>,
    );
    i += (cell.span ?? 1) - 1;
  }
  return (
    <tr className={n === 19 ? "h-[35px]" : n === 5 ? "h-[21px]" : "h-5"}>
      <th
        scope="row"
        className={clsx(
          "border-r border-b border-b-[#b8b8b8] p-0 align-bottom text-[13px] font-normal",
          n === 16
            ? "border-r-2 border-r-[#217346] bg-[#d2d2d2] text-[#217346]"
            : "border-r-[#9b9b9b] bg-[#e6e6e6] text-[#333]",
        )}
      >
        <div className={n === 19 ? "leading-6" : "leading-[19px]"}>{n}</div>
      </th>
      {out}
    </tr>
  );
}

function Sheet() {
  return (
    <div className="flex min-h-0 flex-1">
      <div className="min-w-0 flex-1 overflow-hidden border-r border-[#9b9b9b] bg-white">
        <table className="w-full table-fixed border-separate border-spacing-0 font-['Lato',sans-serif] text-[14px] text-black [font-variant-ligatures:none]">
          <colgroup>
            <col className="w-[26px]" />
            <col className="w-[470px]" />
            <col className="w-[159px]" />
            <col className="w-[114px]" />
            <col className="w-[158px]" />
            <col className="w-[101px]" />
            <col className="w-[82px]" />
            <col className="w-16" />
            <col className="w-16" />
            <col />
          </colgroup>
          <thead>
            <tr className="h-[19px] bg-[#e6e6e6]">
              <th aria-label="Select all" className="border-r border-b border-[#9b9b9b] p-0">
                <Svg w={12} h={12} className="ml-auto mr-[3px]">
                  <path d="M12 0v12H0z" fill="#b4b4b4" />
                </Svg>
              </th>
              {COLS.map((c) => (
                <th
                  key={c}
                  scope="col"
                  className={clsx(
                    "border-r p-0 text-[13px] leading-[17px] font-normal",
                    c === "D"
                      ? "border-b-2 border-r-[#b8b8b8] border-b-[#217346] bg-[#d2d2d2] text-[#217346]"
                      : "border-b border-r-[#b8b8b8] border-b-[#9b9b9b] text-[#333]",
                    c === "I" && "border-r-0 pr-1 text-right",
                  )}
                >
                  {c}
                </th>
              ))}
            </tr>
          </thead>
          <tbody>
            {Array.from({ length: 24 }, (_, i) => (
              <SheetRow key={i} n={i + 1} />
            ))}
          </tbody>
        </table>
      </div>
      <div className="flex w-[21px] shrink-0 flex-col items-start pl-[3px]">
        <button aria-label="Scroll up" className="mt-px flex h-[15px] w-[15px] items-center justify-center border border-[#ababab] bg-white">
          <Svg w={7} h={4}>
            <path d="M0 4h7L3.500 0z" fill="#666" />
          </Svg>
        </button>
        <div className="w-[15px] flex-1 bg-[#dadada]">
          <div className="h-[153px] border border-[#ababab] bg-white" />
        </div>
        <button aria-label="Scroll down" className="flex h-[15px] w-[15px] items-center justify-center border border-[#ababab] bg-white">
          <Svg w={7} h={4}>
            <path d="M0 0h7L3.500 4z" fill="#666" />
          </Svg>
        </button>
      </div>
    </div>
  );
}

function SheetTabs() {
  return (
    <div className="flex h-7 shrink-0 items-start border-t border-[#9b9b9b] text-[#555]">
      <div className="flex h-6 w-[100px] items-center">
        <button aria-label="Previous sheet" className="ml-[26px]">
          <Svg w={5} h={7}>
            <path d="M4.500 0v7L.500 3.500z" fill="#c0c0c0" />
          </Svg>
        </button>
        <button aria-label="Next sheet" className="ml-6">
          <Svg w={5} h={7}>
            <path d="M.500 0v7l4-3.500z" fill="#c0c0c0" />
          </Svg>
        </button>
      </div>
      <button className="-mt-px h-[25px] w-[162px] border-x border-b-2 border-x-[#9b9b9b] border-b-[#217346] bg-white pt-px font-bold text-[#217346]">
        AESA Radar Calculator
      </button>
      <button className="my-[3px] h-5 w-[170px] border-r border-[#9b9b9b]">Pre-calculated variables</button>
      <button className="my-[3px] h-5 w-[188px] border-r border-[#9b9b9b]">Weighting algorithm table</button>
      <button aria-label="New sheet" className="mt-1 ml-[33px]">
        <Svg w={17} h={17}>
          <circle cx="8.500" cy="8.500" r="7.500" stroke="#777" />
          <path d="M8.500 4.500v8M4.500 8.500h8" stroke="#666" strokeWidth="2" />
        </Svg>
      </button>
      <div className="mt-2 ml-auto flex flex-col gap-[3px]">
        <span className="size-[2px] bg-[#b0b0b0]" />
        <span className="size-[2px] bg-[#b0b0b0]" />
        <span className="size-[2px] bg-[#b0b0b0]" />
      </div>
      <div className="mt-[6px] mr-[19px] ml-[15px] flex h-[15px] w-[483px]">
        <button aria-label="Scroll left" className="flex w-[15px] items-center justify-center border border-[#ababab] bg-white">
          <Svg w={4} h={7}>
            <path d="M4 0v7L0 3.500z" fill="#666" />
          </Svg>
        </button>
        <div className="flex-1 bg-[#dadada]">
          <div className="h-full w-[394px] border border-[#ababab] bg-white" />
        </div>
        <button aria-label="Scroll right" className="flex w-[15px] items-center justify-center border border-[#ababab] bg-white">
          <Svg w={4} h={7}>
            <path d="M0 0v7l4-3.500z" fill="#666" />
          </Svg>
        </button>
      </div>
    </div>
  );
}

function StatusBar() {
  return (
    <footer className="flex h-[23px] shrink-0 items-stretch border-t border-b border-t-[#c6c6c6] border-b-[#217346] bg-[#f1f1f1] text-[11px] text-[#555]">
      <span className="flex-1 self-center pl-[7px]">Ready</span>
      <button aria-label="Normal view" className="flex w-[38px] items-center justify-center bg-[#c9c9c9]">
        <Svg w={13} h={13}>
          <path d="M.500.500h12v12H.500zM.500 4.500h12M.500 8.500h12M4.500.500v12M8.500.500v12" stroke="#666" />
        </Svg>
      </button>
      <button aria-label="Page layout view" className="flex w-[38px] items-center justify-center">
        <Svg w={14} h={13}>
          <path d="M.500.500h13v12H.500zM3.500 2.500h7v8h-7zM5 4.500h4M5 6.500h4M5 8.500h4" stroke="#666" />
        </Svg>
      </button>
      <button aria-label="Page break preview" className="flex w-[38px] items-center justify-center">
        <Svg w={14} h={13}>
          <path d="M.500.500h13v12H.500zM4.500.500v7M9.500.500v7M.500 7.500h9" stroke="#666" />
        </Svg>
      </button>
      <button aria-label="Zoom out" className="ml-[5px]">
        <Svg w={6} h={2}>
          <path d="M0 0h6v2H0z" fill="#555" />
        </Svg>
      </button>
      <input
        type="range"
        aria-label="Zoom"
        defaultValue={50}
        className="mx-1 my-auto h-[11px] w-[100px] appearance-none bg-[linear-gradient(#ababab,#ababab)] bg-[length:100%_1px] bg-center bg-no-repeat [&::-webkit-slider-thumb]:h-[11px] [&::-webkit-slider-thumb]:w-1 [&::-webkit-slider-thumb]:appearance-none [&::-webkit-slider-thumb]:bg-[#555]"
      />
      <button aria-label="Zoom in">
        <Svg w={8} h={8}>
          <path d="M3 0h2v3h3v2H5v3H3V5H0V3h3z" fill="#555" />
        </Svg>
      </button>
      <span className="w-[51px] self-center pr-2 text-right">100%</span>
    </footer>
  );
}

export default function App() {
  return (
    <div className="flex h-screen overflow-hidden font-['Open_Sans',sans-serif] text-[12px]">
      <Taskbar />
      <main className="flex min-w-0 flex-1 flex-col bg-[#e6e6e6]">
        <div className="bg-[#217346]">
          <TitleBar />
          <RibbonTabs />
        </div>
        <Ribbon />
        <FormulaBar />
        <Sheet />
        <SheetTabs />
        <StatusBar />
      </main>
    </div>
  );
}
